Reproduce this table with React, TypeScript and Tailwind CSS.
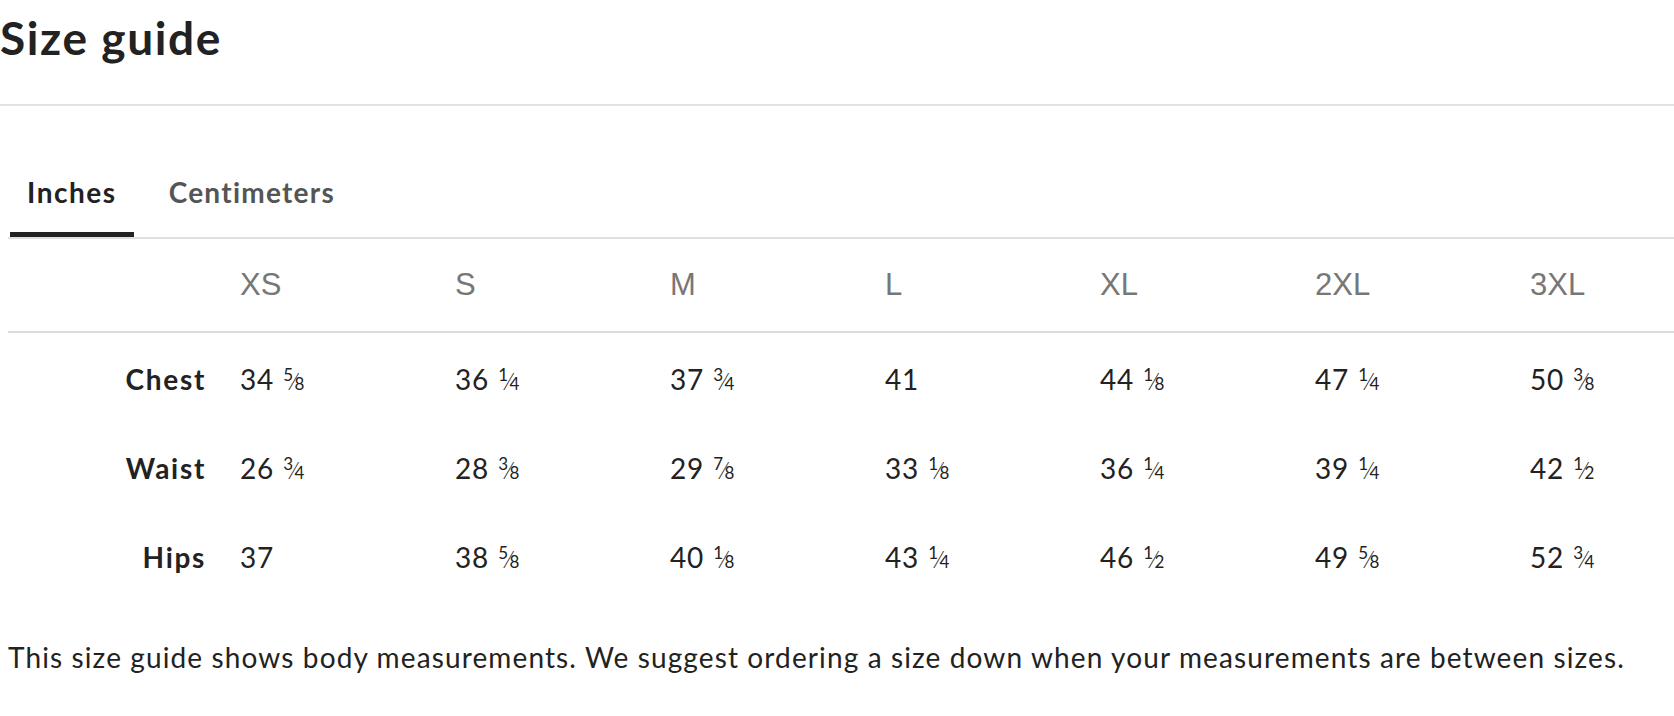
const sizes = ["XS", "S", "M", "L", "XL", "2XL", "3XL"];

type V = [string, string?, string?];

const rows: { label: string; values: V[] }[] = [
  {
    label: "Chest",
    values: [["34", "5", "8"], ["36", "1", "4"], ["37", "3", "4"], ["41"], ["44", "1", "8"], ["47", "1", "4"], ["50", "3", "8"]],
  },
  {
    label: "Waist",
    values: [["26", "3", "4"], ["28", "3", "8"], ["29", "7", "8"], ["33", "1", "8"], ["36", "1", "4"], ["39", "1", "4"], ["42", "1", "2"]],
  },
  {
    label: "Hips",
    values: [["37"], ["38", "5", "8"], ["40", "1", "8"], ["43", "1", "4"], ["46", "1", "2"], ["49", "5", "8"], ["52", "3", "4"]],
  },
];

function Value({ v }: { v: V }) {
  const [whole, num, den] = v;
  return (
    <span>
      {whole}
      {num && (
        <span className="ml-[9px] text-[17px] leading-[0] tracking-normal">
          <span className="align-[9px] leading-[0]">{num}</span>
          <span className="text-[24px] leading-[0] font-light mx-[-1px]">⁄</span>
          <span className="leading-[0]">{den}</span>
        </span>
      )}
    </span>
  );
}

export default function App() {
  return (
    <div className="w-[1674px] h-[716px] bg-white text-[#222] font-['Lato',sans-serif] overflow-hidden">
      <div className="pt-[10px] mb-[39px]">
        <h1 className="text-[46px] leading-[55px] font-bold tracking-[0.035em]">Size guide</h1>
      </div>
      <div className="h-[2px] bg-[#e2e2e2]" />

      <div className="ml-[8px] mt-[69px] flex border-b-2 border-[#e0e0e0]">
        <button className="ml-[2px] px-[17px] pb-[23px] border-b-[5px] border-[#222] text-[28px] leading-[34px] font-bold tracking-[0.055em] text-[#222]">
          Inches
        </button>
        <button className="ml-[18px] px-[17px] pb-[23px] border-b-[5px] border-transparent text-[28px] leading-[34px] font-bold tracking-[0.045em] text-[#555]">
          Centimeters
        </button>
      </div>

      <div className="ml-[8px]">
        <div className="grid grid-cols-[232px_repeat(6,215px)_1fr] border-b-2 border-[#dcdcdc]">
          <div />
          {sizes.map((s) => (
            <div
              key={s}
              className="py-[28px] text-[31px] leading-[36px] text-[#777] font-['Liberation_Sans',Arial,sans-serif]"
            >
              {s}
            </div>
          ))}
        </div>
        {rows.map((r) => (
          <div key={r.label} className="grid grid-cols-[232px_repeat(6,215px)_1fr] h-[89px] pt-[29px]">
            <div className="pr-[34px] text-right text-[28px] leading-[34px] font-bold tracking-[0.06em]">{r.label}</div>
            {r.values.map((v, i) => (
              <div key={i} className="text-[28px] leading-[34px] tracking-[0.03em]">
                <Value v={v} />
              </div>
            ))}
          </div>
        ))}
      </div>

      <p className="ml-[8px] mt-[40px] text-[28px] leading-[34px] tracking-[0.04em]">
        This size guide shows body measurements. We suggest ordering a size down when your measurements are between sizes.
      </p>
    </div>
  );
}
